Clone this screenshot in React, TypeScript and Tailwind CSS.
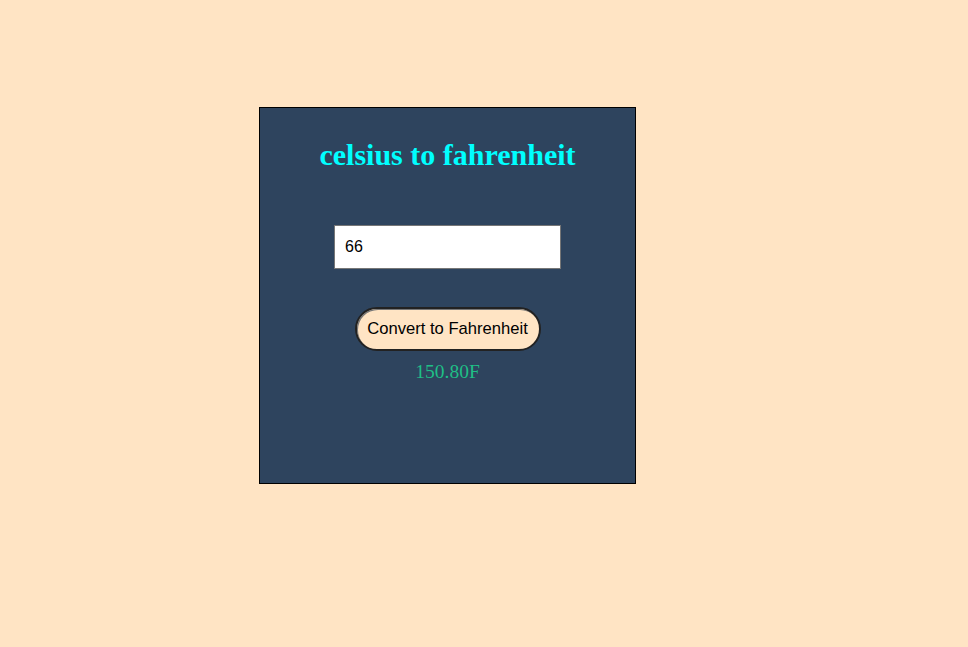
import { useState } from 'react'

export default function App() {
  const [celsius, setCelsius] = useState('66')
  const [result, setResult] = useState('150.80F')

  const convert = () => {
    const c = parseFloat(celsius)
    if (!isNaN(c)) setResult(`${((c * 9) / 5 + 32).toFixed(2)}F`)
  }

  return (
    <div className="min-h-[647px] w-full bg-[#ffe4c4] pl-[259px] pt-[107px]">
      <div className="flex h-[377px] w-[377px] flex-col items-center border border-black bg-[#2e445e]">
        <h1 className="mt-[31px] font-['Liberation_Serif',serif] text-[30px] leading-[32px] font-bold text-[#00ffff]">
          celsius to fahrenheit
        </h1>
        <input
          value={celsius}
          onChange={(e) => setCelsius(e.target.value)}
          className="mt-[54px] h-[44px] w-[227px] border border-[#767676] bg-white px-[10px] font-['Liberation_Sans',sans-serif] text-[16px] text-black outline-none"
        />
        <button
          onClick={convert}
          className="mt-[38px] h-[44px] w-[186px] rounded-full border-2 border-[#222] bg-[#ffe4c4] font-['Liberation_Sans',sans-serif] text-[16.6px] text-black shadow-[inset_1px_1px_0_#777]"
        >
          Convert to Fahrenheit
        </button>
        <p className="mt-[9px] font-['Liberation_Serif',serif] text-[19.5px] leading-[24px] text-[#1fbf86]">
          {result}
        </p>
      </div>
    </div>
  )
}
